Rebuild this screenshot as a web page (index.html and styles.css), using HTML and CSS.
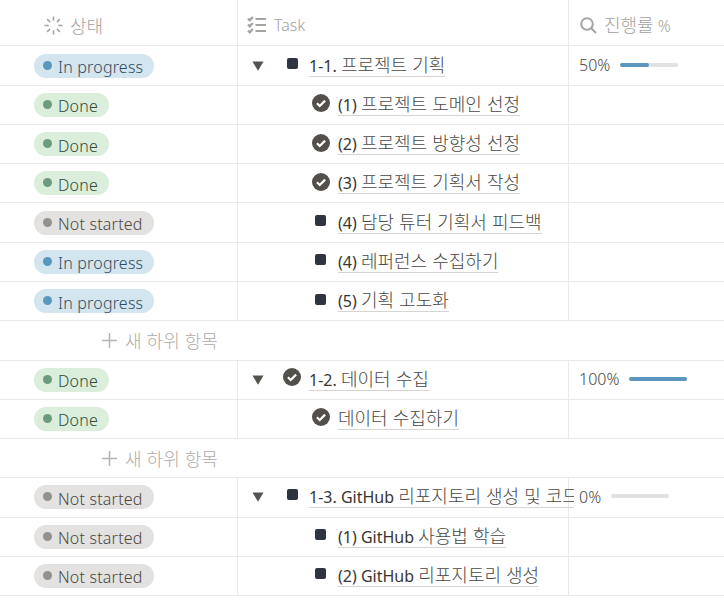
FILE: index.html
```html
<!DOCTYPE html>
<html lang="ko">
<head>
  <meta charset="UTF-8" />
  <title>Tasks</title>
  <link rel="stylesheet" href="styles.css">
</head>
<body>
  <svg class="defs">
    <symbol id="check" viewBox="0 0 18 18">
      <circle cx="9" cy="9" r="9" fill="#53504b" />
      <path d="M4.9 9.3l2.8 2.7 5.4-5.4" fill="none" stroke="#fff" stroke-width="2.2" />
    </symbol>
    <symbol id="square" viewBox="0 0 11 11">
      <rect width="11" height="11" rx="2" fill="#2f3540" />
    </symbol>
    <symbol id="arrow" viewBox="0 0 12 10">
      <path d="M0.5 0.5h11L6 9.8z" fill="#55534e" />
    </symbol>
  </svg>

  <div class="table">
    <!-- header -->
    <div class="row head">
      <div class="cell status-cell">
        <svg class="head-icon spin" viewBox="0 0 18 18">
          <path d="M9 0.5v4M9 13.5v4M0.5 9h4M13.5 9h4M3 3l2.8 2.8M12.2 12.2l2.8 2.8M3 15l2.8-2.8M12.2 5.8l2.8-2.8" />
        </svg>
        <span class="ko">상태</span>
      </div>
      <div class="cell task-cell">
        <svg class="head-icon list" viewBox="0 0 20 18">
          <path class="thick" d="M1 2.5l1.8 1.8 3-3.4M1 8.5l1.8 1.8 3-3.4M1 14.5l1.8 1.8 3-3.4" />
          <path class="thick" d="M8.5 3h10.5M8.5 9h10.5M8.5 15h10.5" />
        </svg>
        <span>Task</span>
      </div>
      <div class="cell pct-cell">
        <svg class="head-icon search" viewBox="0 0 17 17">
          <circle cx="7" cy="7" r="5.8" />
          <path d="M11.2 11.2l4.8 4.8" />
        </svg>
        <span><span class="ko">진행률</span> %</span>
      </div>
    </div>

    <div class="row">
      <div class="cell status-cell"><span class="pill blue"><i></i>In progress</span></div>
      <div class="cell task-cell parent">
        <svg class="arrow"><use href="#arrow" /></svg>
        <span class="slot"><svg class="sq"><use href="#square" /></svg></span>
        <span class="title">1-1. <span class="ko">프로젝트 기획</span></span>
      </div>
      <div class="cell pct-cell"><span class="pct">50%</span><span class="bar"><b class="fill" style="width:50%"></b></span></div>
    </div>

    <div class="row">
      <div class="cell status-cell"><span class="pill green"><i></i>Done</span></div>
      <div class="cell task-cell child"><svg class="chk"><use href="#check" /></svg><span class="title">(1) <span class="ko">프로젝트 도메인 선정</span></span></div>
      <div class="cell pct-cell"></div>
    </div>
    <div class="row">
      <div class="cell status-cell"><span class="pill green"><i></i>Done</span></div>
      <div class="cell task-cell child"><svg class="chk"><use href="#check" /></svg><span class="title">(2) <span class="ko">프로젝트 방향성 선정</span></span></div>
      <div class="cell pct-cell"></div>
    </div>
    <div class="row">
      <div class="cell status-cell"><span class="pill green"><i></i>Done</span></div>
      <div class="cell task-cell child"><svg class="chk"><use href="#check" /></svg><span class="title">(3) <span class="ko">프로젝트 기획서 작성</span></span></div>
      <div class="cell pct-cell"></div>
    </div>
    <div class="row">
      <div class="cell status-cell"><span class="pill gray"><i></i>Not started</span></div>
      <div class="cell task-cell child"><svg class="sq"><use href="#square" /></svg><span class="title">(4) <span class="ko">담당 튜터 기획서 피드백</span></span></div>
      <div class="cell pct-cell"></div>
    </div>
    <div class="row">
      <div class="cell status-cell"><span class="pill blue"><i></i>In progress</span></div>
      <div class="cell task-cell child"><svg class="sq"><use href="#square" /></svg><span class="title">(4) <span class="ko">레퍼런스 수집하기</span></span></div>
      <div class="cell pct-cell"></div>
    </div>
    <div class="row">
      <div class="cell status-cell"><span class="pill blue"><i></i>In progress</span></div>
      <div class="cell task-cell child"><svg class="sq"><use href="#square" /></svg><span class="title">(5) <span class="ko">기획 고도화</span></span></div>
      <div class="cell pct-cell"></div>
    </div>
    <div class="row add">
      <svg class="plus" viewBox="0 0 15 15"><path d="M7.5 0v15M0 7.5h15" /></svg>
      <span class="ko">새 하위 항목</span>
    </div>

    <div class="row">
      <div class="cell status-cell"><span class="pill green"><i></i>Done</span></div>
      <div class="cell task-cell parent">
        <svg class="arrow"><use href="#arrow" /></svg>
        <span class="slot"><svg class="chk"><use href="#check" /></svg></span>
        <span class="title">1-2. <span class="ko">데이터 수집</span></span>
      </div>
      <div class="cell pct-cell"><span class="pct">100%</span><span class="bar"><b class="fill" style="width:100%"></b></span></div>
    </div>
    <div class="row">
      <div class="cell status-cell"><span class="pill green"><i></i>Done</span></div>
      <div class="cell task-cell child"><svg class="chk"><use href="#check" /></svg><span class="title"><span class="ko">데이터 수집하기</span></span></div>
      <div class="cell pct-cell"></div>
    </div>
    <div class="row add">
      <svg class="plus" viewBox="0 0 15 15"><path d="M7.5 0v15M0 7.5h15" /></svg>
      <span class="ko">새 하위 항목</span>
    </div>

    <div class="row">
      <div class="cell status-cell"><span class="pill gray"><i></i>Not started</span></div>
      <div class="cell task-cell parent">
        <svg class="arrow"><use href="#arrow" /></svg>
        <span class="slot"><svg class="sq"><use href="#square" /></svg></span>
        <span class="title clip">1-3. GitHub <span class="ko">리포지토리 생성 및 코드</span></span>
      </div>
      <div class="cell pct-cell"><span class="pct">0%</span><span class="bar"></span></div>
    </div>
    <div class="row">
      <div class="cell status-cell"><span class="pill gray"><i></i>Not started</span></div>
      <div class="cell task-cell child"><svg class="sq"><use href="#square" /></svg><span class="title">(1) GitHub <span class="ko">사용법 학습</span></span></div>
      <div class="cell pct-cell"></div>
    </div>
    <div class="row">
      <div class="cell status-cell"><span class="pill gray"><i></i>Not started</span></div>
      <div class="cell task-cell child"><svg class="sq"><use href="#square" /></svg><span class="title">(2) GitHub <span class="ko">리포지토리 생성</span></span></div>
      <div class="cell pct-cell"></div>
    </div>
  </div>
</body>
</html>
```

FILE: styles.css
```css
body {
  margin: 0;
  background: #fff;
  font-family: "Noto Sans", "Noto Sans CJK KR", sans-serif;
  font-size: 16px;
  color: #37352f;
  overflow: hidden;
}

.defs {
  display: none;
}

.ko {
  font-family: "Noto Sans CJK KR", sans-serif;
  font-size: 18px;
  font-weight: 300;
  line-height: 20px;
  color: #4a4843;
}

.row {
  display: flex;
  height: 39.28px;
  box-sizing: border-box;
  border-bottom: 1px solid #e9e9e7;
}

.head {
  height: 46.4px;
  color: #a3a29e;
  font-weight: 300;
}

.head .cell {
  padding-top: 5px;
}

.head .ko {
  color: #a3a29e;
}

.cell {
  display: flex;
  align-items: center;
  box-sizing: border-box;
  flex: none;
}

.status-cell {
  width: 238px;
  padding-left: 34px;
  border-right: 1px solid #e9e9e7;
}

.task-cell {
  width: 331px;
  border-right: 1px solid #e9e9e7;
}

.pct-cell {
  flex: 1;
  padding-left: 10px;
}

/* header */
.head span {
  white-space: nowrap;
}

.head .status-cell {
  padding-left: 44px;
}

.head .task-cell {
  padding-left: 9px;
}

.head .pct-cell {
  padding-left: 11px;
}

.head-icon {
  flex: none;
  fill: none;
  stroke: #a5a4a0;
  stroke-width: 1.5;
  margin-right: 7px;
}

.spin {
  width: 19px;
  height: 19px;
}

.list {
  width: 20px;
  height: 18px;
}

.list .thick {
  stroke-width: 2.2;
}

.search {
  width: 17px;
  height: 17px;
  stroke-width: 2;
}

/* status pills */
.pill {
  display: inline-flex;
  align-items: center;
  height: 24px;
  padding: 3px 11px 0 9px;
  box-sizing: border-box;
  border-radius: 12px;
  font-weight: 300;
  letter-spacing: 0.2px;
  white-space: nowrap;
}

.pill i {
  width: 9px;
  height: 9px;
  margin: -4px 6px 0 0;
  border-radius: 50%;
}

.blue {
  background: #d3e5ef;
  color: #2f4c5e;
}

.blue i {
  background: #5b97bd;
}

.green {
  background: #dbeddb;
  color: #2f4c3b;
}

.green i {
  background: #6c9b7d;
}

.gray {
  background: #e3e2e0;
  color: #4a4843;
}

.gray i {
  background: #91918e;
}

/* task column */
.title {
  border-bottom: 1px solid #d5d4d1;
  line-height: 20px;
  white-space: nowrap;
}

.parent {
  padding-left: 14px;
}

.parent .title {
  margin-top: -1px;
}

.child {
  padding-left: 74px;
}

.child .title {
  margin: -1px 0 0 9px;
}

.arrow {
  width: 12px;
  height: 10px;
  flex: none;
}

.slot {
  display: flex;
  justify-content: flex-end;
  align-items: center;
  width: 37px;
  margin: -2px 8px 0 0;
  flex: none;
}

.sq {
  width: 11px;
  height: 11px;
  flex: none;
  margin: -4px 3px 0 3px;
}

.slot .sq {
  margin: -3px 3px 0 0;
}

.chk {
  width: 18px;
  height: 18px;
  flex: none;
  margin: -3px -1px 0 0;
}

.slot .chk {
  margin: -3px 0 0 0;
}

.clip {
  max-width: 265px;
  flex: none;
  overflow: hidden;
}

/* progress */
.pct {
  color: #4a4843;
  font-weight: 300;
  margin-top: -1px;
}

.bar {
  display: block;
  width: 58px;
  height: 4px;
  margin: -2px 0 0 10px;
  border-radius: 2px;
  background: #e3e2e0;
}

.fill {
  display: block;
  height: 4px;
  border-radius: 2px;
  background: #5b97bd;
}

/* add row */
.add {
  align-items: center;
  padding-left: 102px;
}

.add .ko {
  color: #aeaca8;
}

.plus {
  width: 15px;
  height: 15px;
  flex: none;
  margin-right: 8px;
  stroke: #b5b4b0;
  stroke-width: 1.5;
}
```
